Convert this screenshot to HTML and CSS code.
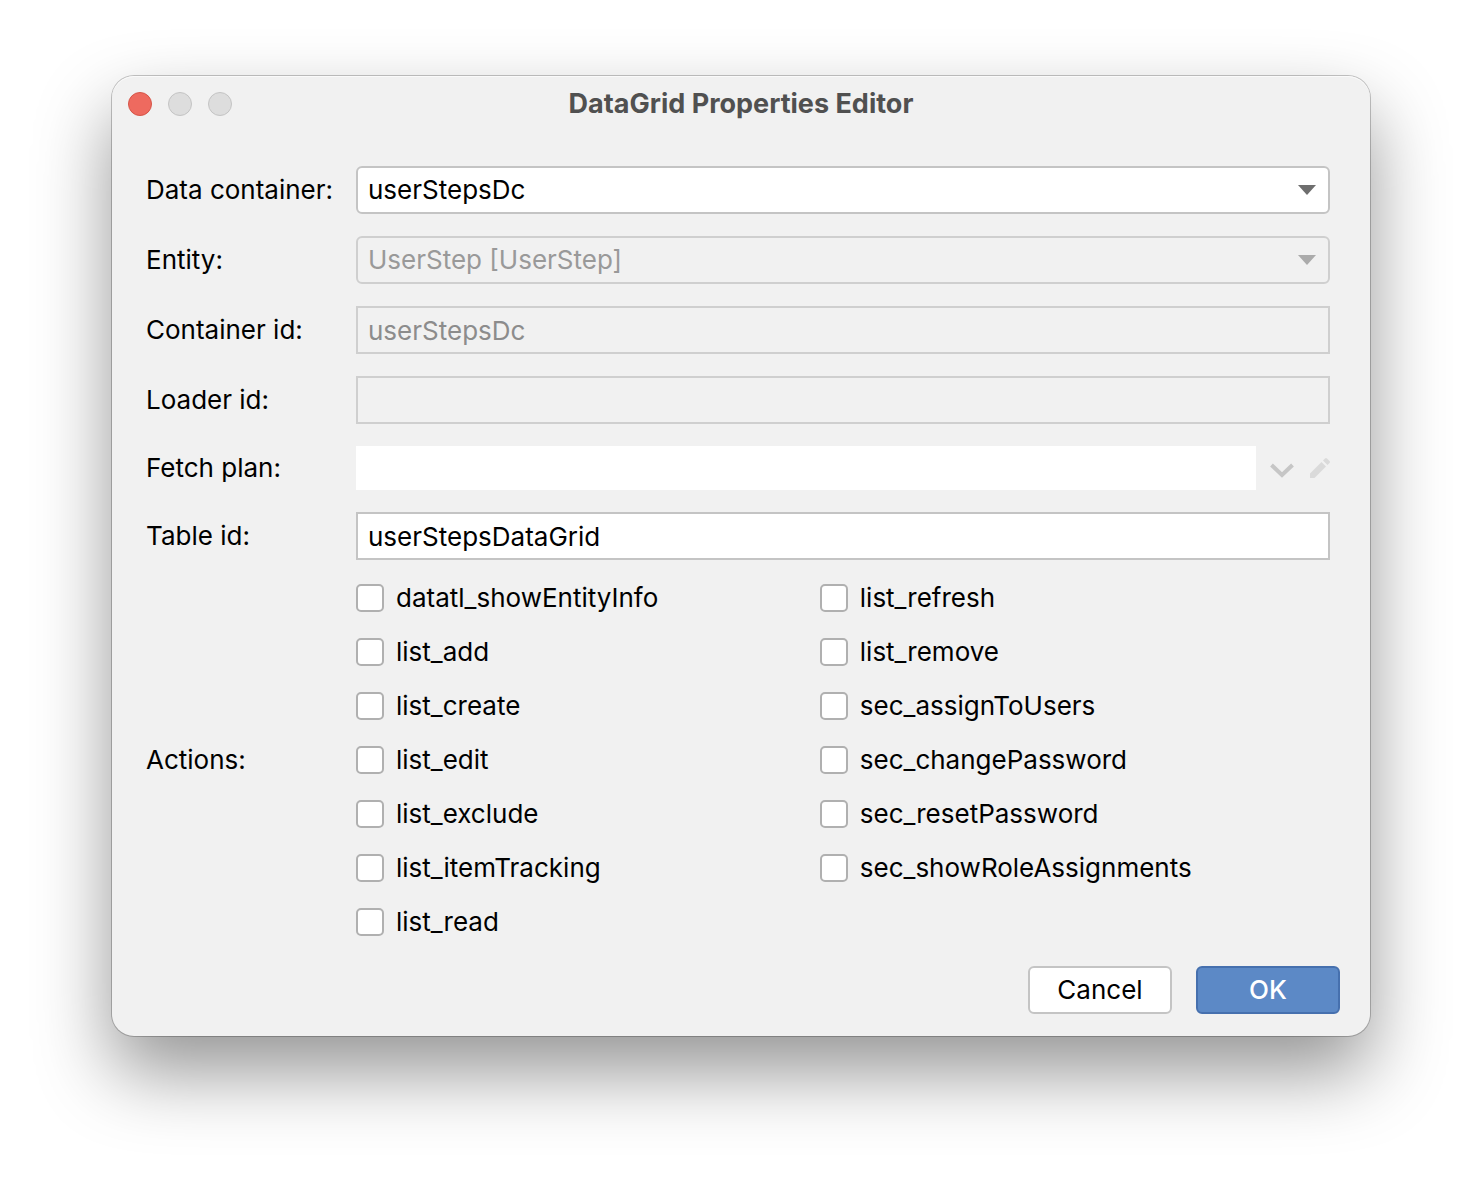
FILE: index.html
```html
<!DOCTYPE html>
<html lang="en">
<head>
<meta charset="utf-8">
<meta name="viewport" content="width=device-width, initial-scale=1">
<title>DataGrid Properties Editor</title>
<link rel="stylesheet" href="styles.css">
</head>
<body>
<main class="dialog" role="dialog" aria-labelledby="dialog-title">
  <header class="titlebar">
    <div class="window-controls">
      <button class="control control-close" type="button" aria-label="Close"></button>
      <button class="control" type="button" aria-label="Minimize" disabled></button>
      <button class="control" type="button" aria-label="Zoom" disabled></button>
    </div>
    <h1 class="title" id="dialog-title">DataGrid Properties Editor</h1>
  </header>
  <form class="form">
    <div class="fields">
      <label class="label" for="data-container">Data container:</label>
      <div class="combo">
        <select class="field field-select" id="data-container"><option>userStepsDc</option></select>
        <svg class="arrow" viewBox="0 0 18 10" aria-hidden="true"><path d="M0 0h18L9 10z"/></svg>
      </div>

      <label class="label" for="entity">Entity:</label>
      <div class="combo combo-disabled">
        <select class="field field-select" id="entity" disabled><option>UserStep [UserStep]</option></select>
        <svg class="arrow" viewBox="0 0 18 10" aria-hidden="true"><path d="M0 0h18L9 10z"/></svg>
      </div>

      <label class="label" for="container-id">Container id:</label>
      <input class="field" id="container-id" type="text" value="userStepsDc" disabled>

      <label class="label" for="loader-id">Loader id:</label>
      <input class="field" id="loader-id" type="text" disabled>

      <label class="label" for="fetch-plan">Fetch plan:</label>
      <div class="fetch">
        <input class="field field-plain" id="fetch-plan" type="text">
        <button class="icon-button" type="button" aria-label="Choose fetch plan" disabled>
          <svg class="icon" viewBox="0 0 24 24" aria-hidden="true"><path d="M1.500 9 12 19 22.500 9" fill="none" stroke="#c6c6c6" stroke-width="4"/></svg>
        </button>
        <button class="icon-button icon-button-edit" type="button" aria-label="Edit fetch plan" disabled>
          <svg class="icon icon-edit" viewBox="0 0 20 20" aria-hidden="true"><path d="M0 15.500 11.500 4l4.500 4.500L4.500 20H0zM13 2.500 15 .5q1-1 2 0L19.500 3q1 1 0 2l-2 2z" fill="#dadada"/></svg>
        </button>
      </div>

      <label class="label" for="table-id">Table id:</label>
      <input class="field" id="table-id" type="text" value="userStepsDataGrid">

      <span class="label" id="actions-label">Actions:</span>
      <div class="actions" role="group" aria-labelledby="actions-label">
        <label class="check"><input class="box" type="checkbox">datatl_showEntityInfo</label>
        <label class="check"><input class="box" type="checkbox">list_add</label>
        <label class="check"><input class="box" type="checkbox">list_create</label>
        <label class="check"><input class="box" type="checkbox">list_edit</label>
        <label class="check"><input class="box" type="checkbox">list_exclude</label>
        <label class="check"><input class="box" type="checkbox">list_itemTracking</label>
        <label class="check"><input class="box" type="checkbox">list_read</label>
        <label class="check"><input class="box" type="checkbox">list_refresh</label>
        <label class="check"><input class="box" type="checkbox">list_remove</label>
        <label class="check"><input class="box" type="checkbox">sec_assignToUsers</label>
        <label class="check"><input class="box" type="checkbox">sec_changePassword</label>
        <label class="check"><input class="box" type="checkbox">sec_resetPassword</label>
        <label class="check"><input class="box" type="checkbox">sec_showRoleAssignments</label>
      </div>
    </div>
    <footer class="footer">
      <button class="button" type="button">Cancel</button>
      <button class="button button-primary" type="submit">OK</button>
    </footer>
  </form>
</main>
</body>
</html>
```
FILE: styles.css
```css
* {
  box-sizing: border-box;
}

body {
  margin: 0;
  padding: 76px 112px 148px;
  background: #fff;
  color: #000;
  font-family: Inter, "Liberation Sans", sans-serif;
  font-size: 26px;
  line-height: 32px;
}

button,
input,
select {
  margin: 0;
  font: inherit;
  color: inherit;
}

.dialog {
  border-radius: 22px;
  background: #f1f1f1;
  box-shadow:
    0 0 0 1px rgba(0, 0, 0, 0.22),
    0 36px 76px rgba(0, 0, 0, 0.42);
}

.titlebar {
  display: grid;
  grid-template-columns: 1fr auto 1fr;
  align-items: center;
  height: 56px;
  padding: 0 16px;
  border-radius: 22px 22px 0 0;
  box-shadow: inset 0 1px #fafafa;
}

.window-controls {
  display: flex;
  gap: 16px;
}

.control {
  width: 24px;
  height: 24px;
  padding: 0;
  border: 1px solid #c4c4c4;
  border-radius: 50%;
  background: #dddddd;
}

.control-close {
  border-color: #d65548;
  background: #ee6a5f;
}

.title {
  margin: 0;
  color: #505050;
  font-size: 27px;
  font-weight: 700;
}

.form {
  padding: 34px 30px 22px 34px;
}

.fields {
  display: grid;
  grid-template-columns: 210px 1fr;
  gap: 22px 0;
  align-items: center;
  padding-right: 10px;
}

.field {
  display: block;
  width: 100%;
  height: 48px;
  padding: 0 10px;
  border: 2px solid #c4c4c4;
  border-radius: 0;
  background: #fff;
}

.field:disabled {
  border-color: #cfcfcf;
  background: #f1f1f1;
  color: #8c8c8c;
  opacity: 1;
}

.combo {
  display: grid;
  align-items: center;
}

.combo > * {
  grid-area: 1 / 1;
}

.field-select {
  appearance: none;
  border-radius: 6px;
}

.field-select:disabled {
  color: #999;
}

.arrow {
  justify-self: end;
  width: 18px;
  height: 10px;
  margin-right: 14px;
  fill: #6e6e6e;
  pointer-events: none;
}

.combo-disabled .arrow {
  fill: #ababab;
}

.fetch {
  display: flex;
  align-items: center;
}

.field-plain {
  flex: 1;
  height: 44px;
  border: 0;
}

.icon-button {
  display: flex;
  margin-left: 14px;
  padding: 0;
  border: 0;
  background: none;
}

.icon-button-edit {
  margin-left: 16px;
}

.icon {
  width: 24px;
  height: 24px;
}

.icon-edit {
  width: 20px;
  height: 20px;
}

.actions {
  display: grid;
  grid-template-columns: 10fr 11fr;
  grid-template-rows: repeat(7, auto);
  grid-auto-flow: column;
  row-gap: 22px;
}

.check {
  display: flex;
  align-items: center;
  gap: 12px;
}

.box {
  appearance: none;
  width: 28px;
  height: 28px;
  border: 2px solid #b0b0b0;
  border-radius: 5px;
  background: #fff;
}

.box:checked {
  border-color: #4a78b5;
  background: #5d89c6;
}

.footer {
  display: flex;
  justify-content: flex-end;
  gap: 24px;
  margin-top: 28px;
}

.button {
  width: 144px;
  height: 48px;
  padding: 0;
  border: 2px solid #c4c4c4;
  border-radius: 6px;
  background: #fff;
}

.button-primary {
  border-color: #4670ae;
  background: #5c89c6;
  color: #fff;
  font-weight: 500;
}
```
